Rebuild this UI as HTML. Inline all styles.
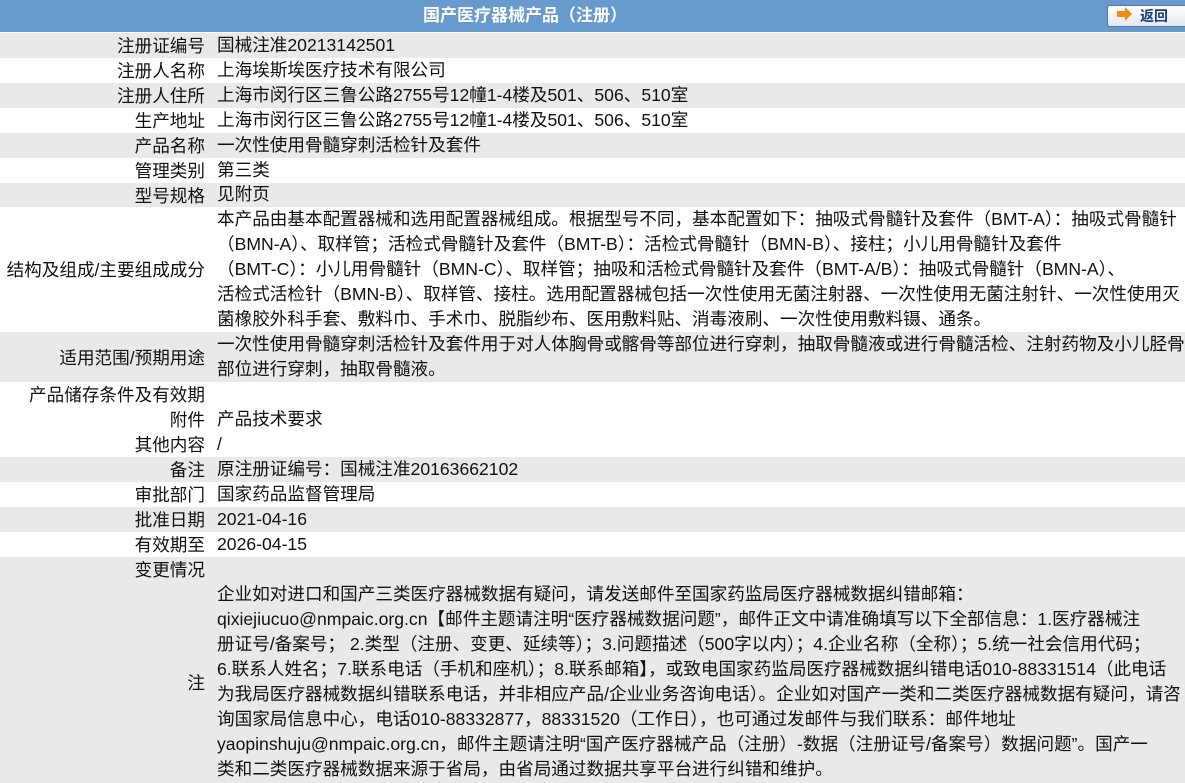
<!DOCTYPE html>
<html><head><meta charset="utf-8"><style>
body{margin:0;width:1185px;height:783px;overflow:hidden;background:#fff;font-family:"Liberation Sans","Noto Sans CJK SC",sans-serif;font-size:17.6px;color:#111;}
.hd{position:absolute;left:0;top:0;width:1185px;height:32px;background:#6699cc;}
.hd .t{position:absolute;left:0;width:1050px;top:5px;text-align:center;color:#fff;font-weight:bold;font-size:17px;line-height:22px;}
.btn{position:absolute;left:1107px;top:5px;width:80px;height:20px;border:1px solid #5577aa;border-radius:3px;background:linear-gradient(#fff,#e4e8ee);font-size:14px;font-weight:bold;color:#1a3f7a;line-height:20px;}
.btn .a{position:absolute;left:9px;top:5px;width:8px;height:6px;background:#f08a10;}
.btn .a:after{content:"";position:absolute;left:8px;top:-4px;border-left:7px solid #f08a10;border-top:7px solid transparent;border-bottom:7px solid transparent;}
.btn span{position:absolute;left:32px;top:0;}
.r{position:absolute;left:0;width:1185px;overflow:hidden;white-space:nowrap;}
.g{background:#e9e9e9;}
.l{position:absolute;right:980px;text-align:right;display:flex;align-items:center;top:0;bottom:0;}
.v{position:absolute;left:217px;top:0;line-height:25px;}
</style></head><body>
<div class="hd"><div class="t">国产医疗器械产品（注册）</div><div class="btn"><div class="a"></div><span>返回</span></div></div>

<div class="r g" style="top:33px;height:25px"><div class="l">注册证编号</div><div class="v">国械注准20213142501</div></div>
<div class="r" style="top:58px;height:25px"><div class="l">注册人名称</div><div class="v">上海埃斯埃医疗技术有限公司</div></div>
<div class="r g" style="top:83px;height:25px"><div class="l">注册人住所</div><div class="v">上海市闵行区三鲁公路2755号12幢1-4楼及501、506、510室</div></div>
<div class="r" style="top:108px;height:25px"><div class="l">生产地址</div><div class="v">上海市闵行区三鲁公路2755号12幢1-4楼及501、506、510室</div></div>
<div class="r g" style="top:133px;height:25px"><div class="l">产品名称</div><div class="v">一次性使用骨髓穿刺活检针及套件</div></div>
<div class="r" style="top:158px;height:25px"><div class="l">管理类别</div><div class="v">第三类</div></div>
<div class="r g" style="top:183px;height:24px"><div class="l">型号规格</div><div class="v" style="top:-1px">见附页</div></div>
<div class="r" style="top:207px;height:125px"><div class="l">结构及组成/主要组成成分</div><div class="v">本产品由基本配置器械和选用配置器械组成。根据型号不同，基本配置如下：抽吸式骨髓针及套件（BMT-A）：抽吸式骨髓针<br>（BMN-A）、取样管；活检式骨髓针及套件（BMT-B）：活检式骨髓针（BMN-B）、接柱；小儿用骨髓针及套件<br>（BMT-C）：小儿用骨髓针（BMN-C）、取样管；抽吸和活检式骨髓针及套件（BMT-A/B）：抽吸式骨髓针（BMN-A）、<br>活检式活检针（BMN-B）、取样管、接柱。选用配置器械包括一次性使用无菌注射器、一次性使用无菌注射针、一次性使用灭<br>菌橡胶外科手套、敷料巾、手术巾、脱脂纱布、医用敷料贴、消毒液刷、一次性使用敷料镊、通条。</div></div>
<div class="r g" style="top:332px;height:50px"><div class="l">适用范围/预期用途</div><div class="v">一次性使用骨髓穿刺活检针及套件用于对人体胸骨或髂骨等部位进行穿刺，抽取骨髓液或进行骨髓活检、注射药物及小儿胫骨<br>部位进行穿刺，抽取骨髓液。</div></div>
<div class="r" style="top:382px;height:25px"><div class="l">产品储存条件及有效期</div><div class="v"></div></div>
<div class="r" style="top:407px;height:25px"><div class="l">附件</div><div class="v">产品技术要求</div></div>
<div class="r" style="top:432px;height:25px"><div class="l">其他内容</div><div class="v">/</div></div>
<div class="r g" style="top:457px;height:25px"><div class="l">备注</div><div class="v">原注册证编号：国械注准20163662102</div></div>
<div class="r" style="top:482px;height:25px"><div class="l">审批部门</div><div class="v">国家药品监督管理局</div></div>
<div class="r g" style="top:507px;height:25px"><div class="l">批准日期</div><div class="v">2021-04-16</div></div>
<div class="r" style="top:532px;height:25px"><div class="l">有效期至</div><div class="v">2026-04-15</div></div>
<div class="r g" style="top:557px;height:25px"><div class="l">变更情况</div><div class="v"></div></div>
<div class="r g" style="top:582px;height:201px"><div class="l">注</div><div class="v">企业如对进口和国产三类医疗器械数据有疑问，请发送邮件至国家药监局医疗器械数据纠错邮箱：<br>qixiejiucuo@nmpaic.org.cn【邮件主题请注明“医疗器械数据问题”，邮件正文中请准确填写以下全部信息：1.医疗器械注<br>册证号/备案号； 2.类型（注册、变更、延续等）；3.问题描述（500字以内）；4.企业名称（全称）；5.统一社会信用代码；<br>6.联系人姓名；7.联系电话（手机和座机）；8.联系邮箱】，或致电国家药监局医疗器械数据纠错电话010-88331514（此电话<br>为我局医疗器械数据纠错联系电话，并非相应产品/企业业务咨询电话）。企业如对国产一类和二类医疗器械数据有疑问，请咨<br>询国家局信息中心，电话010-88332877，88331520（工作日），也可通过发邮件与我们联系：邮件地址<br>yaopinshuju@nmpaic.org.cn，邮件主题请注明“国产医疗器械产品（注册）-数据（注册证号/备案号）数据问题”。国产一<br>类和二类医疗器械数据来源于省局，由省局通过数据共享平台进行纠错和维护。</div></div>
</body></html>
